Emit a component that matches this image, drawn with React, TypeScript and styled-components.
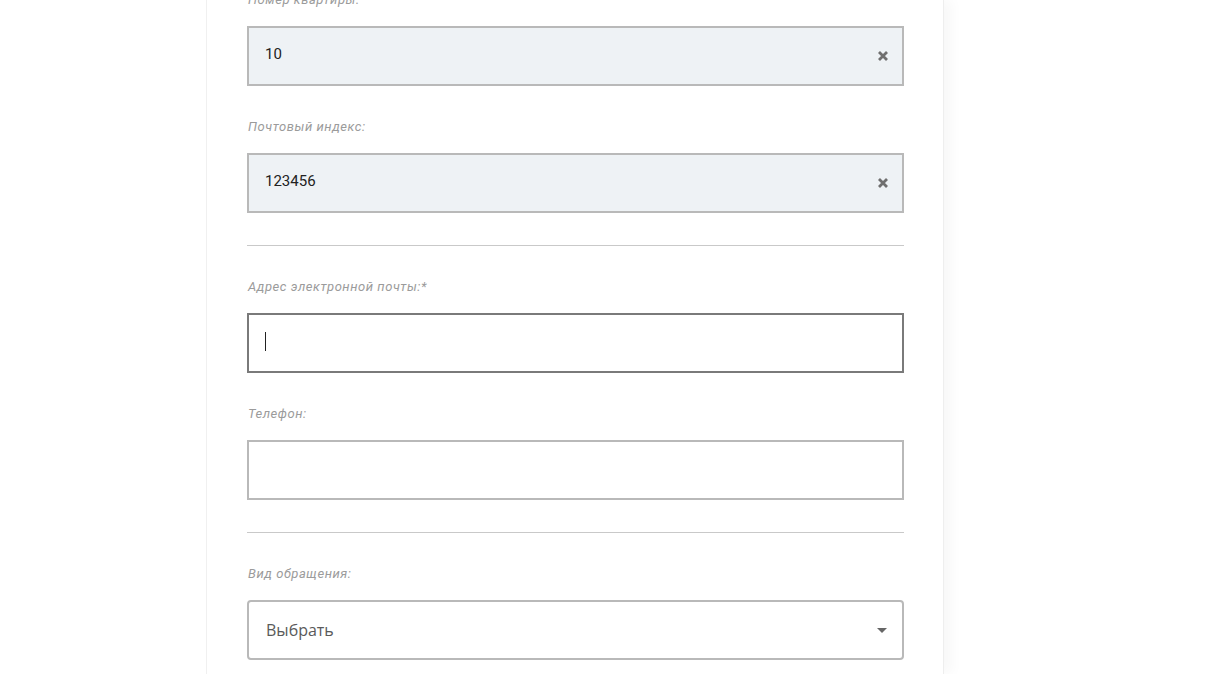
import React from "react";
import styled, { createGlobalStyle } from "styled-components";

const GlobalStyle = createGlobalStyle`
	html, body {
		margin: 0;
		padding: 0;
		background: #ffffff;
		height: 674px;
		overflow: hidden;
	}
`;

const Page = styled.div`
	height: 674px;
	padding-left: 206px;
	box-sizing: border-box;
	display: flex;
`;

const Card = styled.div`
	width: 738px;
	height: 674px;
	box-sizing: border-box;
	background: #fff;
	border-left: 1px solid #f0f0f0;
	border-right: 1px solid #eeeeee;
	box-shadow: 8px 0 12px rgba(0, 0, 0, 0.03);
	padding: 0 39px 0 40px;
	overflow: hidden;
`;

const Form = styled.div`
	margin-top: -9px;
	display: flex;
	flex-direction: column;
`;

const Field = styled.div`
	display: flex;
	flex-direction: column;
	margin-bottom: 32px;
`;

const Label = styled.label`
	font-family: Roboto, "Noto Sans", sans-serif;
	font-style: italic;
	font-size: 13px;
	line-height: 18px;
	height: 18px;
	color: #9b9b9b;
	margin-bottom: 17px;
	padding-left: 1px;
	letter-spacing: 0.55px;
`;

interface BoxProps {
	$filled?: boolean;
	$focused?: boolean;
}

const InputBox = styled.div<BoxProps>`
	height: 60px;
	box-sizing: border-box;
	border: 2px solid ${(p) => (p.$focused ? "#7a7a7a" : "#b9b9b9")};
	background: ${(p) => (p.$filled ? "#eef2f5" : "#ffffff")};
	display: flex;
	align-items: center;
	padding: 0 16px;
	font-family: Roboto, "Noto Sans", sans-serif;
	font-size: 15px;
	color: #222;
`;

const Value = styled.span`
	flex: 1;
	margin-top: -4px;
`;

const Caret = styled.span`
	display: block;
	width: 1px;
	height: 19px;
	background: #222;
	margin-top: -4px;
`;

const ClearButton = styled.span`
	display: flex;
	align-items: center;
	justify-content: center;
	width: 12px;
	height: 12px;
	margin-right: -3px;
	margin-top: -1px;
`;

const Divider = styled.div`
	height: 1px;
	background: #c9c9c9;
	margin-bottom: 32px;
`;

const SelectBox = styled.div`
	height: 60px;
	box-sizing: border-box;
	border: 2px solid #b9b9b9;
	border-radius: 4px;
	display: flex;
	align-items: center;
	padding: 0 16px 0 17px;
	font-family: "Open Sans", sans-serif;
	font-size: 16px;
	color: #5a5a5a;
`;

const SelectText = styled.span`
	flex: 1;
`;

const Arrow = styled.span`
	width: 0;
	height: 0;
	border-left: 5px solid transparent;
	border-right: 5px solid transparent;
	border-top: 5px solid #666;
	margin-right: -1px;
`;

function ClearIcon() {
	return (
		<svg width="12" height="12" viewBox="0 0 12 12">
			<path
				d="M2 2 L10 10 M10 2 L2 10"
				stroke="#6f6f6f"
				strokeWidth="2.8"
				strokeLinecap="butt"
			/>
		</svg>
	);
}

export default function App() {
	return (
		<>
			<GlobalStyle />
			<Page>
				<Card>
					<Form>
						<Field>
							<Label>Номер квартиры:</Label>
							<InputBox $filled>
								<Value>10</Value>
								<ClearButton>
									<ClearIcon />
								</ClearButton>
							</InputBox>
						</Field>
						<Field>
							<Label>Почтовый индекс:</Label>
							<InputBox $filled>
								<Value>123456</Value>
								<ClearButton>
									<ClearIcon />
								</ClearButton>
							</InputBox>
						</Field>
						<Divider />
						<Field>
							<Label>Адрес электронной почты:*</Label>
							<InputBox $focused>
								<Caret />
							</InputBox>
						</Field>
						<Field>
							<Label>Телефон:</Label>
							<InputBox />
						</Field>
						<Divider />
						<Field>
							<Label>Вид обращения:</Label>
							<SelectBox>
								<SelectText>Выбрать</SelectText>
								<Arrow />
							</SelectBox>
						</Field>
					</Form>
				</Card>
			</Page>
		</>
	);
}
